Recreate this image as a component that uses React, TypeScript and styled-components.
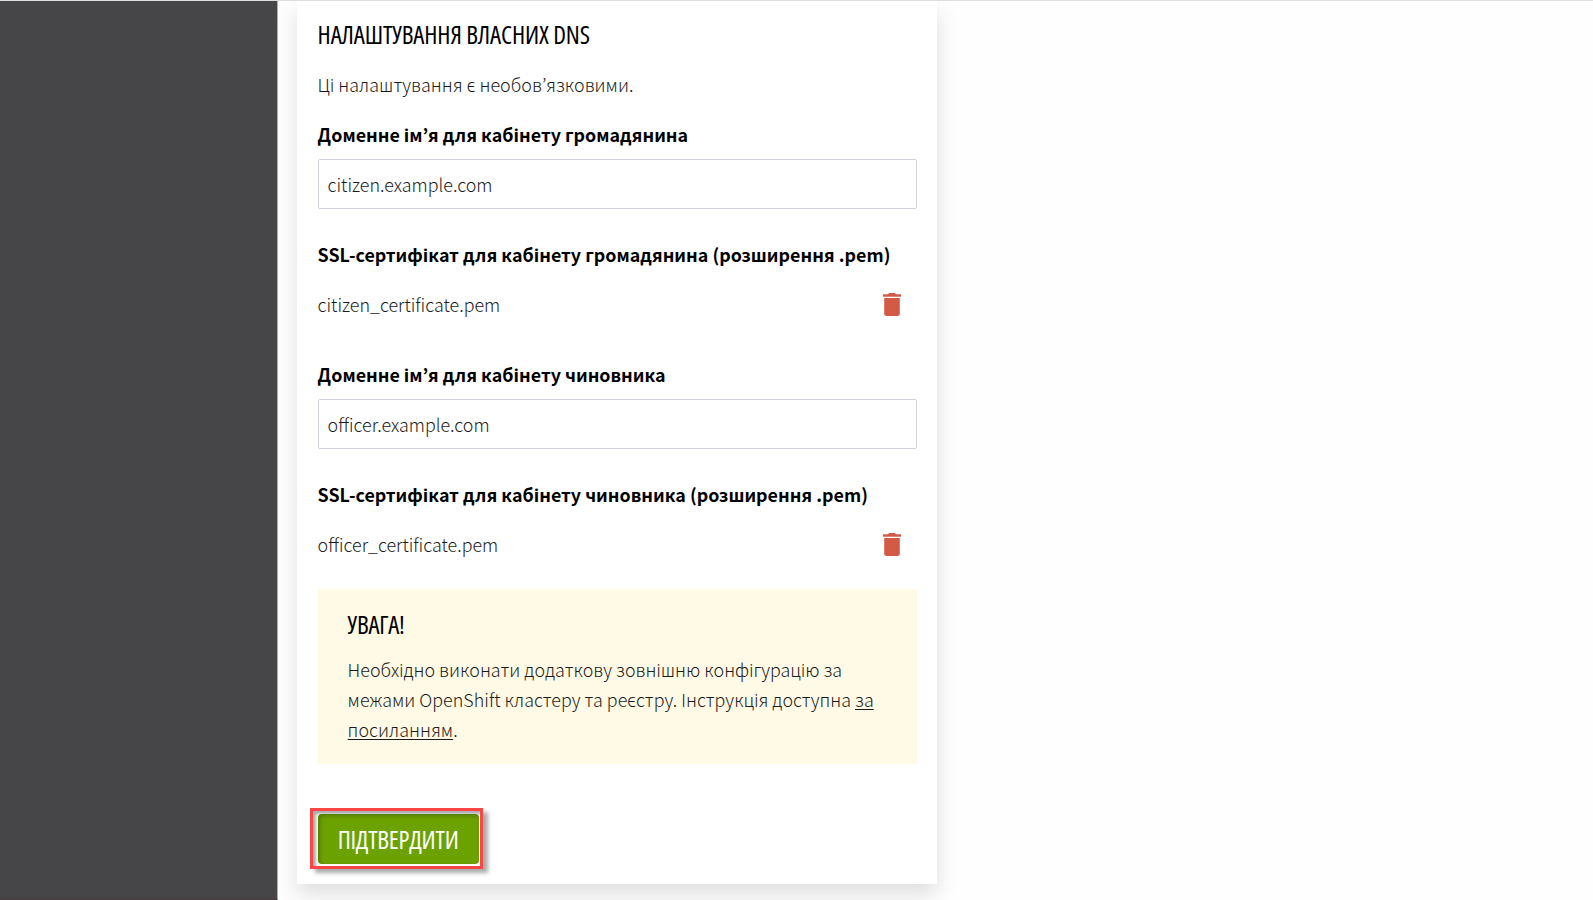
import React from "react";
import styled, { createGlobalStyle } from "styled-components";

const GlobalStyle = createGlobalStyle`
  * { box-sizing: border-box; }
  body {
    margin: 0;
    background: #fefefe;
    color: #000;
    font-family: "Noto Sans CJK KR", "Noto Sans", sans-serif;
    font-size: 17.88px;
    font-weight: 300;
    line-height: 30px;
    overflow: hidden;
  }
`;

const Page = styled.div`
  display: flex;
  height: 900px;
  border-top: 1px solid #dcdddd;
`;

const Sidebar = styled.aside`
  flex: none;
  width: 278px;
  background: #464648;
  border-right: 1px solid #b0b0b0;
  border-bottom: 1px solid #4b3b3f;
`;

const Main = styled.main`
  flex: 1;
  padding-left: 20px;
  overflow: hidden;
`;

const Card = styled.form`
  display: flex;
  flex-direction: column;
  width: 640px;
  height: 883px;
  padding: 16px 20px 0 20.6px;
  margin-left: -1px;
  background: #fff;
  box-shadow: 0 10px 20px rgba(0, 0, 0, 0.13);
`;

const Heading = styled.h2<{ $tracking?: number }>`
  margin: 0;
  font-family: "Open Sans", sans-serif;
  font-stretch: 75%;
  font-size: 25px;
  font-weight: 430;
  line-height: 34px;
  letter-spacing: ${(p) => p.$tracking ?? 0}px;
`;

const Intro = styled.p`
  margin: 18px 0 20px;
  color: #1a1a1a;
  letter-spacing: 0.04px;
`;

const Field = styled.div`
  display: flex;
  flex-direction: column;
  height: 120px;
`;

const Label = styled.label`
  font-weight: 700;
`;

const TextInput = styled.input`
  height: 50px;
  margin-top: 10px;
  padding: 0 9px 1px;
  border: 1px solid #cfd1de;
  border-radius: 2px;
  background: #fff;
  color: #1a1a1a;
  font: inherit;
  outline: none;
`;

const FileRow = styled.div`
  display: flex;
  align-items: center;
  justify-content: space-between;
  height: 30px;
  margin-top: 20px;
  padding-right: 16px;
  color: #1a1a1a;
`;

const TrashIcon = styled.svg`
  display: block;
  width: 18px;
  height: 23px;
  fill: #d35b45;
`;

const Notice = styled.section`
  height: 175px;
  margin-top: -10px;
  padding: 18px 30px 0;
  background: #fffae6;
`;

const NoticeText = styled.p`
  margin: 13px 0 0;
  color: #1a1a1a;
  letter-spacing: 0.035px;
  white-space: nowrap;
`;

const NoticeLink = styled.a`
  color: inherit;
  text-decoration: underline;
  text-decoration-thickness: 1px;
  text-underline-offset: 2px;
`;

const Highlight = styled.div`
  align-self: flex-start;
  width: 173px;
  height: 61px;
  margin: 44px 0 0 -7.6px;
  padding: 3px 3.4px 3px 4.6px;
  border: 3px solid #fe4545;
  background: #fff;
  box-shadow: 5px 4px 4px rgba(0, 0, 0, 0.33), inset 3px 3px 3px rgba(0, 0, 0, 0.33);
`;

const SubmitButton = styled.button`
  display: block;
  width: 161px;
  height: 50px;
  padding: 0 0 1px;
  border: 0;
  border-radius: 4px;
  background: #6ca200;
  box-shadow: inset 2px 2px 4px rgba(0, 0, 0, 0.25);
  color: #fff;
  font-family: "Open Sans", sans-serif;
  font-stretch: 75%;
  font-size: 25px;
  font-weight: 380;
  letter-spacing: -0.25px;
`;

const Trash = () => (
  <TrashIcon viewBox="0 0 18 23">
    <path d="M0 1.3H5L6.2 0H11.8L13 1.3H18V3.8H0ZM1.2 5H16.8V20.5Q16.8 23 14.3 23H3.7Q1.2 23 1.2 20.5Z" />
  </TrashIcon>
);

const cabinets = [
  { owner: "громадянина", domain: "citizen.example.com", file: "citizen_certificate.pem" },
  { owner: "чиновника", domain: "officer.example.com", file: "officer_certificate.pem" },
];

export default function App() {
  return (
    <>
      <GlobalStyle />
      <Page>
        <Sidebar />
        <Main>
          <Card>
            <Heading $tracking={-0.13}>НАЛАШТУВАННЯ ВЛАСНИХ DNS</Heading>
            <Intro>Ці налаштування є необов’язковими.</Intro>
            {cabinets.map((c) => (
              <React.Fragment key={c.domain}>
                <Field>
                  <Label>Доменне ім’я для кабінету {c.owner}</Label>
                  <TextInput defaultValue={c.domain} />
                </Field>
                <Field>
                  <Label>SSL-сертифікат для кабінету {c.owner} (розширення .pem)</Label>
                  <FileRow>
                    {c.file}
                    <Trash />
                  </FileRow>
                </Field>
              </React.Fragment>
            ))}
            <Notice>
              <Heading $tracking={-0.25}>УВАГА!</Heading>
              <NoticeText>
                Необхідно виконати додаткову зовнішню конфігурацію за
                <br />
                межами OpenShift кластеру та реєстру. Інструкція доступна{" "}
                <NoticeLink>
                  за
                  <br />
                  посиланням
                </NoticeLink>
                .
              </NoticeText>
            </Notice>
            <Highlight>
              <SubmitButton type="button">ПІДТВЕРДИТИ</SubmitButton>
            </Highlight>
          </Card>
        </Main>
      </Page>
    </>
  );
}
